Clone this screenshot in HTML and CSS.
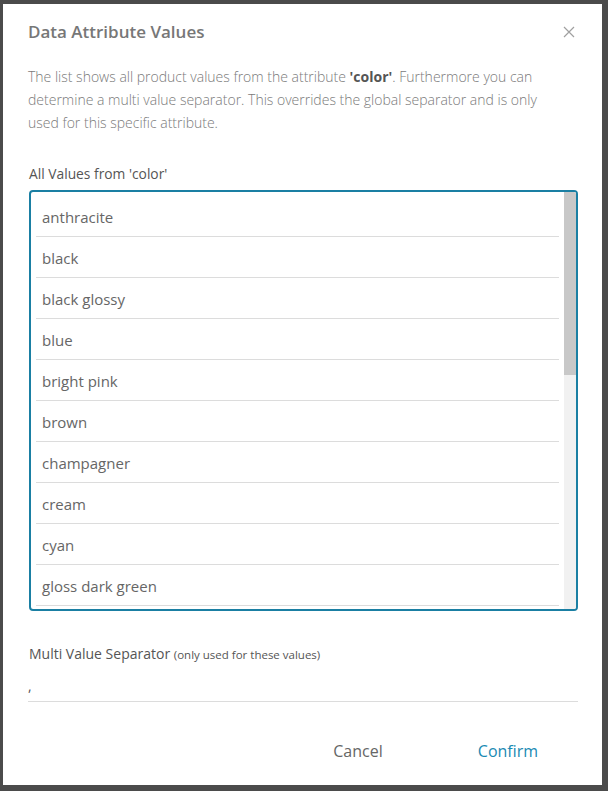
FILE: index.html
```html
<!DOCTYPE html>
<html lang="en">
<head>
<meta charset="utf-8">
<title>Data Attribute Values</title>
<link rel="stylesheet" href="styles.css">
</head>
<body>
<div class="backdrop">
  <div class="dialog">
    <div class="header">
      <h2 class="title">Data Attribute Values</h2>
      <button class="close" aria-label="Close">
        <svg width="12" height="12" viewBox="0 0 12 12"><path d="M1 1L11 11M11 1L1 11" stroke="#a0a0a0" stroke-width="1.2" fill="none"/></svg>
      </button>
    </div>
    <p class="desc">The list shows all product values from the attribute <b>'color'</b>. Furthermore you can determine a multi value separator. This overrides the global separator and is only used for this specific attribute.</p>
    <div class="label">All Values from 'color'</div>
    <div class="listbox">
      <ul class="items">
        <li>anthracite</li>
        <li>black</li>
        <li>black glossy</li>
        <li>blue</li>
        <li>bright pink</li>
        <li>brown</li>
        <li>champagner</li>
        <li>cream</li>
        <li>cyan</li>
        <li>gloss dark green</li>
      </ul>
      <div class="scrollbar"><div class="thumb"></div></div>
    </div>
    <div class="sep-label">Multi Value Separator <small>(only used for these values)</small></div>
    <div class="input">,</div>
    <div class="footer">
      <button class="btn cancel">Cancel</button>
      <button class="btn confirm">Confirm</button>
    </div>
  </div>
</div>
</body>
</html>
```
FILE: styles.css
```css
html, body {
  margin: 0;
  padding: 0;
  height: 100%;
}
body {
  background: #4b4b4b;
  font-family: "Open Sans", "Noto Sans", sans-serif;
}
.backdrop {
  padding: 4px 6px 6px 3px;
  height: 100%;
  box-sizing: border-box;
}
.dialog {
  background: #fff;
  height: 781px;
  box-sizing: border-box;
  padding: 16px 24px 0 25px;
  display: flex;
  flex-direction: column;
}
.header {
  display: flex;
  align-items: center;
  justify-content: space-between;
  height: 24px;
}
.title {
  margin: 0;
  font-size: 17px;
  font-weight: 600;
  color: #777;
  line-height: 24px;
}
.close {
  border: 0;
  background: none;
  padding: 0;
  margin-right: 3px;
  width: 12px;
  height: 12px;
  display: flex;
}
.desc {
  margin: 21px 12px 0 0;
  font-size: 14px;
  font-weight: 300;
  line-height: 23px;
  color: #7a7a7a;
}
.desc b {
  font-weight: 700;
  color: #555;
}
.label {
  margin-top: 31px;
  font-size: 13.8px;
  line-height: 18px;
  color: #555;
  padding-left: 1px;
}
.listbox {
  margin: 7px 0 0 1px;
  height: 421px;
  box-sizing: border-box;
  border: 2px solid #1a7fa3;
  border-radius: 4px;
  overflow: hidden;
  display: flex;
}
.items {
  list-style: none;
  margin: 0;
  padding: 4px 0 0 0;
  flex: 1;
  overflow: hidden;
}
.items li {
  margin: 0 5px;
  padding-left: 6px;
  height: 40px;
  line-height: 42px;
  border-bottom: 1px solid #dcdcdc;
  font-size: 15px;
  color: #666;
}
.scrollbar {
  width: 12px;
  background: #f1f1f1;
  flex-shrink: 0;
}
.thumb {
  height: 183px;
  background: #c8c8c8;
}
.sep-label {
  margin-top: 33px;
  font-size: 14px;
  line-height: 20px;
  color: #555;
  padding-left: 1px;
}
.sep-label small {
  font-size: 11.5px;
}
.input {
  margin-top: 6px;
  height: 30px;
  line-height: 30px;
  border-bottom: 1px solid #dcdcdc;
  font-size: 14px;
  color: #555;
}
.footer {
  display: flex;
  justify-content: flex-end;
  gap: 30px;
  margin-top: 29px;
  padding-right: 10px;
}
.btn {
  width: 120px;
  height: 40px;
  border: 0;
  background: none;
  font-family: "Open Sans", "Noto Sans", sans-serif;
  font-size: 16px;
  cursor: pointer;
}
.cancel {
  color: #666;
}
.confirm {
  color: #1a8ab3;
}
```
